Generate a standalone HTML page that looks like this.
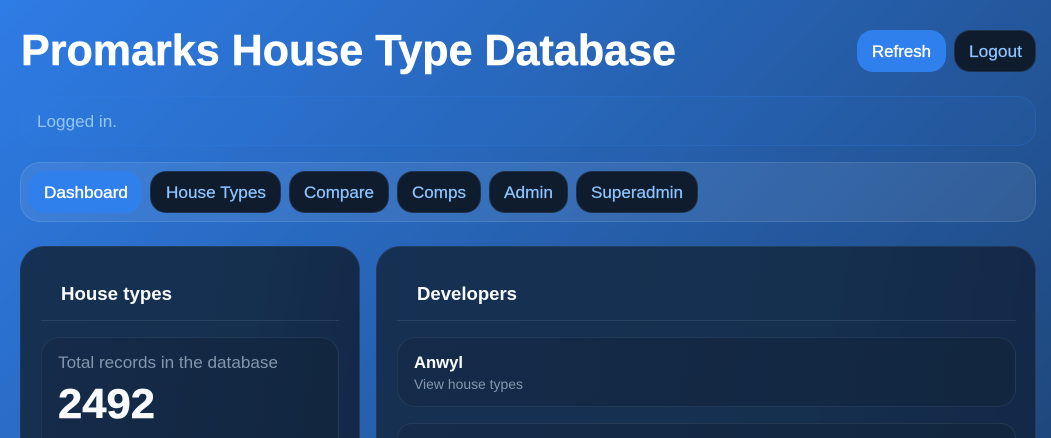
<!DOCTYPE html>
<html lang="en">
<head>
<meta charset="utf-8">
<title>Promarks House Type Database</title>
<style>
html,body{margin:0;padding:0;width:1051px;height:438px;overflow:hidden}
body{position:relative;background:linear-gradient(135deg,#2e7ce6 0%,#1f487d 100%);font-family:"Liberation Sans",sans-serif}
.a{position:absolute;box-sizing:border-box}
.btn{top:171px;height:42px;border-radius:16px;background:#0f1c2e;border:1px solid rgba(100,140,190,.2)}
.pri{background:#2f80ed;border:none}
.card{top:246px;height:192px;border-radius:24px 24px 0 0;background:linear-gradient(100deg,#163053 0%,#15304f 62%,#142848 100%);border:1px solid rgba(148,163,184,.13);border-bottom:0}
.in{border-radius:18px;background:linear-gradient(100deg,#152b4a 0%,#12263f 100%);border:1px solid rgba(148,163,184,.13)}
.hr{height:1px;top:320px;background:rgba(148,163,184,.17)}
svg{position:absolute;left:0;top:0}
text{font-family:"Liberation Sans",sans-serif}
.m{stroke:#8ec5ff;stroke-width:.2px}
.w{stroke:#fff;stroke-width:.35px}
</style>
</head>
<body>
<div class="a" style="left:20px;top:96px;width:1016px;height:50px;border-radius:18px;background:rgba(47,128,237,.06);border:1px solid rgba(47,128,237,.22)"></div>
<div class="a" style="left:20px;top:162px;width:1016px;height:60px;border-radius:20px;background:rgba(255,255,255,.08);border:1px solid rgba(255,255,255,.1)"></div>

<div class="a btn pri" style="left:857px;top:30px;width:89px"></div>
<div class="a btn" style="left:954px;top:30px;width:82px"></div>

<div class="a btn pri" style="left:29px;width:112px"></div>
<div class="a btn" style="left:150px;width:131px"></div>
<div class="a btn" style="left:289px;width:100px"></div>
<div class="a btn" style="left:397px;width:84px"></div>
<div class="a btn" style="left:489px;width:79px"></div>
<div class="a btn" style="left:576px;width:122px"></div>

<div class="a card" style="left:20px;width:340px"></div>
<div class="a card" style="left:376px;width:660px"></div>
<div class="a hr" style="left:41px;width:298px"></div>
<div class="a hr" style="left:397px;width:619px"></div>
<div class="a in" style="left:41px;top:337px;width:298px;height:101px;border-bottom:0;border-radius:18px 18px 0 0"></div>
<div class="a in" style="left:397px;top:337px;width:619px;height:70px"></div>
<div class="a in" style="left:397px;top:423px;width:619px;height:15px;border-bottom:0;border-radius:18px 18px 0 0"></div>

<svg width="1051" height="438" viewBox="0 0 1051 438">
<text x="21" y="65" font-size="44" font-weight="700" fill="#fff" stroke="#fff" stroke-width=".5" textLength="655" lengthAdjust="spacingAndGlyphs">Promarks House Type Database</text>
<text class="w" x="872" y="57" font-size="16.5" fill="#fff" textLength="59" lengthAdjust="spacingAndGlyphs">Refresh</text>
<text class="m" x="969" y="57" font-size="16.5" fill="#8ec5ff" textLength="53" lengthAdjust="spacingAndGlyphs">Logout</text>
<text x="37" y="127" font-size="16.5" fill="#93c5f8" textLength="80" lengthAdjust="spacingAndGlyphs">Logged in.</text>

<text class="w" x="44" y="198" font-size="16.5" fill="#fff" textLength="84" lengthAdjust="spacingAndGlyphs">Dashboard</text>
<text class="m" x="166" y="198" font-size="16.5" fill="#8ec5ff" textLength="100" lengthAdjust="spacingAndGlyphs">House Types</text>
<text class="m" x="304" y="198" font-size="16.5" fill="#8ec5ff" textLength="70" lengthAdjust="spacingAndGlyphs">Compare</text>
<text class="m" x="412" y="198" font-size="16.5" fill="#8ec5ff" textLength="54" lengthAdjust="spacingAndGlyphs">Comps</text>
<text class="m" x="504" y="198" font-size="16.5" fill="#8ec5ff" textLength="49" lengthAdjust="spacingAndGlyphs">Admin</text>
<text class="m" x="591" y="198" font-size="16.5" fill="#8ec5ff" textLength="92" lengthAdjust="spacingAndGlyphs">Superadmin</text>

<text x="61" y="300" font-size="18.5" font-weight="700" fill="#f8fafc" textLength="111" lengthAdjust="spacingAndGlyphs">House types</text>
<text x="417" y="300" font-size="18.5" font-weight="700" fill="#f8fafc" textLength="100" lengthAdjust="spacingAndGlyphs">Developers</text>
<text x="58" y="368" font-size="16.5" fill="#8496ad" textLength="220" lengthAdjust="spacingAndGlyphs">Total records in the database</text>
<text x="58" y="418" font-size="42" font-weight="700" fill="#f8fafc" stroke="#f8fafc" stroke-width=".5" textLength="97" lengthAdjust="spacingAndGlyphs">2492</text>
<text x="414" y="368" font-size="16.5" font-weight="700" fill="#f8fafc" textLength="49" lengthAdjust="spacingAndGlyphs">Anwyl</text>
<text x="414" y="389" font-size="13.5" fill="#8496ad" textLength="109" lengthAdjust="spacingAndGlyphs">View house types</text>
</svg>
</body>
</html>
